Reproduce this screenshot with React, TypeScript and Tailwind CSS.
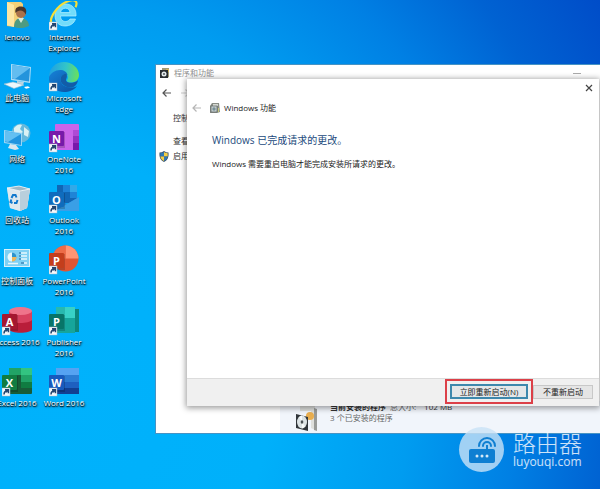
import React from 'react';

const ShortcutArrow = () => (
  <g>
    <rect x="0" y="21" width="8" height="8" fill="#f4f8fb" stroke="#a9bccb" strokeWidth=".5" />
    <path d="M2 27.5c0-2 .8-3.2 2.6-3.4M3 22.8h3.4v3.4M6.2 23 4 25.2" fill="none" stroke="#24456f" strokeWidth="1.5" />
  </g>
);

type OfficeProps = { letter: string; badge: string; children: React.ReactNode };

const OfficeIcon = ({ letter, badge, children }: OfficeProps) => (
  <svg viewBox="0 0 30 30" className="h-[30px] w-[30px]" aria-hidden="true">
    {children}
    <rect x="7" y="9" width="9" height="16" fill="#000" opacity=".18" />
    <rect x="0" y="8" width="15" height="15" rx="1" fill={badge} />
    <text x="7.5" y="19.5" textAnchor="middle" fontSize="11" fontWeight="700" fill="#fff" fontFamily="Open Sans, sans-serif">
      {letter}
    </text>
    <ShortcutArrow />
  </svg>
);

const Svg = ({ children }: { children: React.ReactNode }) => (
  <svg viewBox="0 0 30 30" className="h-[30px] w-[30px]" aria-hidden="true">
    {children}
  </svg>
);

const UserFolder = () => (
  <Svg>
    <path d="M5 1h14l2 2v20l-8 3-8-1z" fill="#f3d078" />
    <path d="M5 1l7 3v22l-7-2z" fill="#fce6a4" />
    <path d="M12 26c0-6 3-9 7-9s8 3 8 8c-4 2-10 3-15 1z" fill="#4d9b83" />
    <path d="M16 17l3 5 3-5z" fill="#dcebdc" />
    <circle cx="19" cy="12" r="5" fill="#a9714c" />
    <path d="M13.5 12c-1-5 2-7 6-6.5 4 0 6 4 4 8-1-3-3-4-5-4s-4 1-5 2.5z" fill="#49352b" />
  </Svg>
);

const InternetExplorer = () => (
  <Svg>
    <path d="M27 15H11.500c.2 4 2.500 5.500 5 5.500 2 0 3.500-.8 4.500-2.500h5.500c-1.500 4.500-5.500 7-10.500 7C9.500 25 6 20.500 6 14.500S10 3 16.500 3C23.500 3 27.500 8 27 15zM11.500 11.500H21c-.3-2.800-2-4.300-4.500-4.300s-4.500 1.500-5 4.300z" fill="#72dcfa" stroke="#b7f1ff" strokeWidth=".7" />
    <path d="M3 23C-1 18 8 5 17 1c5-2.500 9-2.500 10-.3 1 1.500.5 3.500-.5 5.500" fill="none" stroke="#f5de38" strokeWidth="2.2" />
    <ShortcutArrow />
  </Svg>
);

const ThisPc = () => (
  <Svg>
    <path d="M9 2l20 3-1 16-19-3z" fill="#a9dcf7" />
    <path d="M10 3l18 3-1 13.500-17-2.800z" fill="#2494dc" />
    <path d="M10 3l18 3-15 11-3-.5z" fill="#63bdf0" />
    <path d="M15 19l7 1-1 3-6-1z" fill="#b9d4e4" />
    <path d="M2 22l9-2 11 3-10 3.500z" fill="#eef7fb" stroke="#9dbccb" strokeWidth=".6" />
    <path d="M22 25l4-.8 2 1.500-4 1z" fill="#fff" />
  </Svg>
);

const Edge = () => (
  <Svg>
    <defs>
      <linearGradient id="edgeTop" x1="0" y1=".4" x2="1" y2=".5">
        <stop offset="0" stopColor="#1f9fe3" />
        <stop offset=".55" stopColor="#32c5c9" />
        <stop offset="1" stopColor="#6be05a" />
      </linearGradient>
      <linearGradient id="edgeLow" x1="0" y1="0" x2="1" y2="1">
        <stop offset="0" stopColor="#1683d9" />
        <stop offset="1" stopColor="#0c4f9e" />
      </linearGradient>
    </defs>
    <path d="M0 15C0 6 7 0 15 0s15 6 15 13c0 5-4 7.500-8 7.500-3 0-5-1-4-2.500 2-2 1-8-6-8C7 10 2 12 0 15z" fill="url(#edgeTop)" />
    <path d="M0 15c2-4 6-7 11-7 4 0 7 2 7.500 5-3-2-7 0-7 4.500 0 5 5 8 10 8 3 0 5-.5 6.500-1.500C25 28 20 30 15 30 6 30-1 24 0 15z" fill="url(#edgeLow)" />
    <path d="M11.500 17.500c0-4 3-6 6-5.500 1 2.500 0 4-.5 5.500-.5 2 2 3.500 6 3.200 3-.2 5-1.500 6-2.700-.5 4-3 7-6.500 7.500-5 .5-11-3-11-8z" fill="#125ca8" />
    <ShortcutArrow />
  </Svg>
);

const Network = () => (
  <Svg>
    <circle cx="19" cy="10" r="9.500" fill="#65b9dc" />
    <path d="M12 5c3-4 7-4 8-3l-2 4 3 3-5 3-4-2zM22 4l5 4-1 6-4-2z" fill="#d9f1f4" />
    <path d="M2 7l18 3v13L2 20z" fill="#9ad6f5" />
    <path d="M3 8l16 3v11L3 19z" fill="#2095df" />
    <path d="M3 8l16 3-13 8-3-.5z" fill="#63c0f2" />
    <path d="M8 21l6 1 3 4-4 1-7-2z" fill="#d9e7ee" />
  </Svg>
);

const RecycleBin = () => (
  <Svg>
    <path d="M5 4l12-2 11 3-3 19-7 3-10-3z" fill="#c8dbe5" />
    <path d="M5 4l13 3 10-2-3 19-7 3-10-3z" fill="#dfe9ee" />
    <path d="M18 7l10-2-3 19-7 3z" fill="#b9cfdc" />
    <path d="M5 4l12-2 11 3-10 2z" fill="#9cb8c7" stroke="#f2f8fa" strokeWidth=".8" />
    <path d="M9.500 14l1.500-3h2.500l1 2.500M15.500 16l-1 3h-2.500M10.500 19l-2-1 .8-2.500" fill="none" stroke="#1279cd" strokeWidth="2" />
  </Svg>
);

const ControlPanel = () => (
  <Svg>
    <rect x="2.500" y="4.500" width="25" height="17" fill="#7fd1f4" stroke="#d8f2fb" />
    <circle cx="10" cy="12" r="4.500" fill="#e9f8fd" />
    <path d="M10 12V7.500a4.500 4.500 0 0 1 0 9z" fill="#2d94cd" />
    <path d="M10 12h4.500a4.500 4.500 0 0 1-4.500 4.500z" fill="#f0b85c" />
    <path d="M17 8h8M17 11h8M17 14h8M6 18.500h10M19 18h6" stroke="#e6f7fd" strokeWidth="1.300" />
    <path d="M17 8h2M17 11h2M17 14h2M19 18h3" stroke="#247fb8" strokeWidth="1.300" />
  </Svg>
);

const desktopIcons = [
  { lines: ['lenovo'], icon: <UserFolder /> },
  { lines: ['Internet', 'Explorer'], icon: <InternetExplorer /> },
  { lines: ['此电脑'], icon: <ThisPc /> },
  { lines: ['Microsoft', 'Edge'], icon: <Edge /> },
  { lines: ['网络'], icon: <Network /> },
  {
    lines: ['OneNote', '2016'],
    icon: (
      <OfficeIcon letter="N" badge="#7719aa">
        <rect x="6" y="1" width="24" height="26" rx="1" fill="#ca64ea" />
        <path d="M24 7h6v7h-6z" fill="#ae4bd5" />
        <path d="M24 13h6v7h-6z" fill="#9332bf" />
        <path d="M24 20h6v7h-6z" fill="#7719aa" />
      </OfficeIcon>
    ),
  },
  { lines: ['回收站'], icon: <RecycleBin /> },
  {
    lines: ['Outlook', '2016'],
    icon: (
      <OfficeIcon letter="O" badge="#0f6cbd">
        <rect x="8" y="1" width="20" height="18" fill="#1066b5" />
        <path d="M14 1h7v7h-7z" fill="#1d83d8" />
        <path d="M21 1h7v7h-7z" fill="#32a9e8" />
        <path d="M21 8h7v6h-7z" fill="#1f84d6" />
        <path d="M6 13l12 7 12-7v14H6z" fill="#1f87d8" />
        <path d="M30 13v14H6z" fill="#3a9fe6" />
      </OfficeIcon>
    ),
  },
  { lines: ['控制面板'], icon: <ControlPanel /> },
  {
    lines: ['PowerPoint', '2016'],
    icon: (
      <OfficeIcon letter="P" badge="#c43e1c">
        <circle cx="16.500" cy="13.500" r="13" fill="#e05533" />
        <path d="M16.500 .5a13 13 0 0 1 13 13h-13z" fill="#ff9574" />
        <path d="M16.500 .5a13 13 0 0 0-13 13h13z" fill="#ed6c47" />
      </OfficeIcon>
    ),
  },
  {
    lines: ['Access 2016'],
    icon: (
      <OfficeIcon letter="A" badge="#a51730">
        <path d="M7 5v18c0 5 23 5 23 0V5z" fill="#b91d3a" />
        <path d="M7 5v9c3 4 20 4 23 0V5z" fill="#d8415f" />
        <ellipse cx="18.500" cy="5" rx="11.500" ry="4" fill="#ef748b" />
      </OfficeIcon>
    ),
  },
  {
    lines: ['Publisher', '2016'],
    icon: (
      <OfficeIcon letter="P" badge="#077568">
        <rect x="14" y="3" width="16" height="23" fill="#0d877c" />
        <rect x="7" y="1" width="19" height="26" fill="#16a59b" />
        <rect x="16" y="1" width="10" height="11" fill="#38d1c6" />
        <rect x="7" y="1" width="9" height="11" fill="#28b9af" />
      </OfficeIcon>
    ),
  },
  {
    lines: ['Excel 2016'],
    icon: (
      <OfficeIcon letter="X" badge="#107c41">
        <rect x="7" y="1" width="23" height="26" rx="1" fill="#185c37" />
        <path d="M7 1h12v7H7z" fill="#21a366" />
        <path d="M19 1h11v7H19z" fill="#33c481" />
        <path d="M19 8h11v7H19z" fill="#21a366" />
        <path d="M19 15h11v6H19z" fill="#107c41" />
      </OfficeIcon>
    ),
  },
  {
    lines: ['Word 2016'],
    icon: (
      <OfficeIcon letter="W" badge="#185abd">
        <path d="M7 1h23v7H7z" fill="#55a3f2" />
        <path d="M7 8h23v7H7z" fill="#2b7cd3" />
        <path d="M7 15h23v6H7z" fill="#1e60c0" />
        <path d="M7 21h23v6H7z" fill="#123f91" />
      </OfficeIcon>
    ),
  },
];

const BackArrow = () => (
  <svg viewBox="0 0 10 10" className="h-[10px] w-[10px]" fill="none" stroke="currentColor" strokeWidth="1.200" aria-hidden="true">
    <path d="M9 5H1M4.500 1.500L1 5l3.500 3.500" />
  </svg>
);

const ProgramsIcon = () => (
  <svg viewBox="0 0 10 10" className="h-[10px] w-[10px]" aria-hidden="true">
    <path d="M2 0h7v9l-2 1V2H2z" fill="#9c9878" />
    <path d="M6 1h3v3H6z" fill="#d6b55c" />
    <rect x="0" y="2" width="8" height="8" fill="#292d30" />
    <circle cx="4" cy="6" r="2.500" fill="#e5ebed" />
    <circle cx="4" cy="6" r=".9" fill="#41484c" />
  </svg>
);

const FeaturesIcon = () => (
  <svg viewBox="0 0 10 10" className="h-[10px] w-[10px]" aria-hidden="true">
    <path d="M2 0h7l1 9-3 1H0V3z" fill="#898d86" />
    <path d="M3 1h5v2H3z" fill="#d5d9d2" />
    <rect x="1" y="3" width="6" height="6" fill="#c7cfd0" stroke="#5d6565" strokeWidth=".7" />
    <circle cx="4" cy="6" r="1.700" fill="#789198" />
    <path d="M8 5h1v4H8z" fill="#c4c977" />
  </svg>
);

const Shield = () => (
  <svg viewBox="0 0 10 11" className="h-[11px] w-[10px]" aria-hidden="true">
    <path d="M5 0c1.500 1 3 1.500 4.500 1.500C10 6 8.500 9.500 5 11 1.500 9.500 0 6 .5 1.500 2 1.500 3.500 1 5 0z" fill="#3c566d" />
    <path d="M5 1v4.500H1.300V2.200C2.700 2.200 3.900 1.700 5 1z" fill="#2f78b5" />
    <path d="M5 1c1.100.7 2.300 1.200 3.700 1.200v3.300H5z" fill="#f3ce45" />
    <path d="M1.400 5.500H5V10C3 9 1.700 7.500 1.400 5.500z" fill="#f3ce45" />
    <path d="M5 5.500h3.600C8.300 7.500 7 9 5 10z" fill="#2f78b5" />
  </svg>
);

const InstallerBox = () => (
  <svg viewBox="0 0 26 28" className="h-[28px] w-[26px]" aria-hidden="true">
    <path d="M6 1h15v24l-4-2V6H6z" fill="#dedfdc" />
    <path d="M20 3l3 1v22l-3-1z" fill="#999b99" />
    <circle cx="16" cy="11" r="4" fill="#e9ae4e" />
    <path d="M2 9l12 3v14L2 23z" fill="#30353a" />
    <ellipse cx="8" cy="17" rx="5" ry="6.500" fill="#dce3e5" />
    <path d="M8 17l-3-5 3-1.500zM8 17l3 4.500-3 2z" fill="#f8fbfb" />
    <ellipse cx="8" cy="17" rx="1.300" ry="1.800" fill="#4a5155" />
  </svg>
);

const ProgramsWindow = () => (
  <section
    aria-label="程序和功能"
    className="absolute top-[64px] -right-8 bottom-[55px] left-[155px] flex flex-col border border-[#4693c4] bg-white text-[#333]"
  >
    <header className="flex h-4 items-center gap-1 pr-[50px] pl-1 text-[#909090]">
      <ProgramsIcon />
      <h2 className="flex-1">程序和功能</h2>
      <button aria-label="最小化" className="h-px w-2 bg-[#aaa]" />
    </header>
    <div className="flex h-6 items-center gap-2 px-[6px] text-[#555]">
      <button aria-label="后退"><BackArrow /></button>
      <button aria-label="前进" className="rotate-180 text-[#ccc]"><BackArrow /></button>
    </div>
    <div className="flex flex-1">
      <nav className="w-[124px] pt-[6px] pl-[17px]">
        <a href="#home" className="block leading-[14px]">控制</a>
        <a href="#updates" className="mt-[9px] block leading-[14px]">查看</a>
        <a href="#features" className="mt-px -ml-[14px] flex items-center gap-1 leading-[14px]">
          <Shield />
          启用
        </a>
      </nav>
      <div className="flex flex-1 flex-col justify-end">
        <div className="flex items-end gap-[10px] bg-[#f1f5fb] pl-[14px]">
          <InstallerBox />
          <div className="pb-[10px] leading-[11px] text-[#666]">
            <p>
              <strong className="text-[#333]">当前安装的程序</strong>
              <span className="ml-1">总大小:</span>
              <span className="ml-2 text-[#333]">102 MB</span>
            </p>
            <p>3 个已安装的程序</p>
          </div>
        </div>
      </div>
    </div>
  </section>
);

const FeaturesDialog = () => (
  <section
    role="dialog"
    aria-label="Windows 功能"
    className="absolute top-[79px] right-px bottom-[83px] left-[187px] flex flex-col bg-white text-[#222] shadow-[0_1px_6px_1px_rgba(0,0,0,0.4)]"
  >
    <div className="flex justify-end pt-[5px] pr-[6px]">
      <button aria-label="关闭" className="text-[#444]">
        <svg viewBox="0 0 8 8" className="h-2 w-2" fill="none" stroke="currentColor" strokeWidth="1.200" aria-hidden="true">
          <path d="M1 1l6 6M7 1L1 7" />
        </svg>
      </button>
    </div>
    <header className="mt-[9px] flex h-[14px] items-center pl-[5px]">
      <button aria-label="返回" className="text-[#b5b5b5]"><BackArrow /></button>
      <span className="mr-1 ml-2"><FeaturesIcon /></span>
      <h2>Windows 功能</h2>
    </header>
    <div className="flex-1 px-[25px] pt-[16px]">
      <h1 className="text-[10px] leading-[18px] text-[#224a7c]">Windows 已完成请求的更改。</h1>
      <p className="mt-2 leading-[14px]">Windows 需要重启电脑才能完成安装所请求的更改。</p>
    </div>
    <footer className="flex items-center justify-end border-t border-[#dcdcdc] bg-[#f0f0f0] pr-[6px] pb-[2px]">
      <span className="border-2 border-[#dc4048] p-[3px]">
        <button className="block h-[15px] w-[78px] border-2 border-[#3d88ad] bg-[#e4e7e9] leading-[10px]">立即重新启动(N)</button>
      </span>
      <button className="h-[14px] w-[60px] border border-[#c8c8c8] bg-[#e5e5e5] leading-[11px]">不重新启动</button>
    </footer>
  </section>
);

const Watermark = () => (
  <div className="absolute right-[18px] bottom-[17px] flex items-center gap-[9px] text-white/80">
    <span className="flex h-[45px] w-[45px] items-center justify-center rounded-full bg-[#c9e2f6]/80">
      <svg viewBox="0 0 28 26" className="h-[26px] w-[28px]" aria-hidden="true">
        <rect x="1" y="12" width="26" height="14" rx="2" fill="#0f7fd2" />
        <path d="M19 13V8" stroke="#0f7fd2" strokeWidth="2" />
        <path d="M11 9a8 8 0 0 1 16 0M15 9a4 4 0 0 1 8 0" fill="none" stroke="#0f7fd2" strokeWidth="2" strokeLinecap="round" />
        <circle cx="9" cy="19" r="1.500" fill="#d5e9f8" />
        <circle cx="14" cy="19" r="1.500" fill="#d5e9f8" />
        <circle cx="19" cy="19" r="1.500" fill="#d5e9f8" />
      </svg>
    </span>
    <div>
      <p className="text-[23px] leading-[24px] font-light">路由器</p>
      <p className="text-[12px] leading-[14px]">luyouqi.com</p>
    </div>
  </div>
);

const App = () => (
  <main className="relative min-h-screen overflow-hidden bg-[radial-gradient(110%_150%_at_10%_80%,#00b2fc_0%,#00b0fa_32%,#009cf0_53%,#0080e4_69%,#0062d2_83%,#004cc8_98%)] font-['Open_Sans','Noto_Sans_CJK_SC',sans-serif] text-[8px]">
    <div className="-ml-[7px] grid auto-rows-[61px] grid-cols-[48px_46px] pt-px">
      {desktopIcons.map((item) => (
        <button key={item.lines.join(' ')} className="flex flex-col items-center">
          {item.icon}
          <span className="leading-[11px] whitespace-nowrap text-white [text-shadow:0_1px_1px_#000,1px_1px_2px_#000]">
            {item.lines.map((line) => (
              <span key={line} className="block">{line}</span>
            ))}
          </span>
        </button>
      ))}
    </div>
    <ProgramsWindow />
    <FeaturesDialog />
    <Watermark />
  </main>
);

export default App;
